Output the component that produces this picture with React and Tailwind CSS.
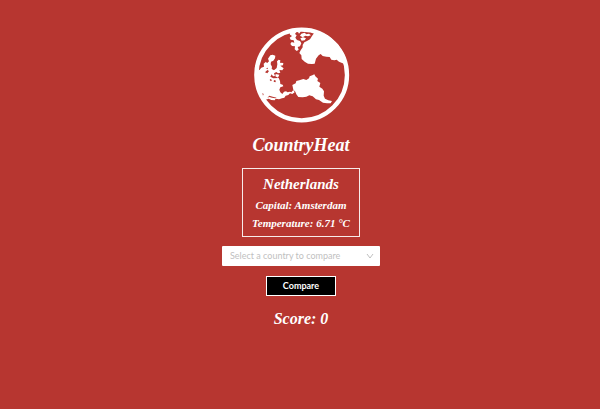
import React from "react";

function Globe() {
  return (
    <svg viewBox="0 0 306 306" className="size-[102px]" role="img" aria-label="Globe">
      <circle cx="155" cy="153" r="136" fill="none" stroke="#fff" strokeWidth="13" />
      <g fill="#fff">
        <path d="M187 20 L192 28 L186 36 L180 46 L171 51 L163 55 L158 63 L158 70 L152 79 L148 87 L154 94 L155 105 L164 113 L174 119 L186 120 L194 119 L198 104 L206 94 L212 90 L218 96 L229 98 L239 99 L244 107 L253 109 L260 107 L267 113 L278 118 L291 121 L283 92 L264 61 L235 35 L205 22 Z" />
        <path d="M119 24 L132 20 L139 24 L135 30 L140 34 L136 41 L141 48 L150 51 L154 58 L150 67 L143 69 L146 77 L140 81 L134 76 L135 67 L126 66 L121 60 L125 54 L133 56 L131 49 L122 47 L119 41 L126 36 L120 32 Z" />
        <path d="M142 20 L152 23 L147 29 Z M154 29 L164 26 L169 31 L177 29 L183 34 L174 37 L166 35 L158 40 L150 35 Z M151 43 L160 40 L168 43 L164 49 L155 50 Z" />
        <path d="M61 94 L68 92 L76 95 L75 103 L70 110 L63 113 L62 121 L66 128 L65 135 L72 139 L80 132 L82 121 L81 112 L86 107 L91 109 L90 116 L100 117 L99 124 L91 125 L101 133 L97 139 L88 138 L91 146 L84 148 L79 144 L72 148 L75 156 L69 157 L65 151 L61 158 L70 163 L86 162 L90 171 L91 180 L98 182 L100 187 L91 190 L88 197 L91 205 L97 210 L102 203 L108 202 L113 205 L120 203 L124 205 L130 198 L134 205 L127 210 L120 208 L115 213 L107 215 L103 221 L96 223 L87 226 L77 224 L74 229 L64 228 L56 224 L45 228 L35 216 L22 185 L18 150 L24 141 L29 137 L34 131 L42 128 L41 119 L48 113 L51 118 L57 112 L54 104 Z" />
        <path d="M77 150 L88 152 L84 161 L76 157 Z M86 131 L94 134 L90 139 L84 136 Z" />
        <path d="M127 183 L137 178 L139 171 L148 169 L160 165 L169 168 L177 163 L179 157 L187 154 L193 151 L196 157 L204 164 L202 171 L211 177 L208 188 L217 194 L222 202 L221 215 L225 224 L235 229 L246 231 L242 238 L231 238 L219 236 L207 228 L198 226 L188 217 L178 214 L169 218 L158 220 L145 219 L139 211 L136 203 L130 197 Z" />
      </g>
      <g fill="#b73630">
        <path d="M45 145 L52 138 L57 141 L52 148 Z M61 165 L66 168 L63 172 L59 168 Z M72 168 L78 170 L76 175 L71 173 Z M37 207 L41 210 L39 215 Z M48 133 L53 131 L54 136 Z" />
        <path d="M52 221 L58 215 L68 218 L80 221 L76 223 L66 221 L58 219 Z" />
      </g>
    </svg>
  );
}

export default function App() {
  return (
    <main className="flex min-h-screen flex-col items-center bg-[#b73630] pt-6 pl-0.5 font-['Liberation_Serif',serif] font-bold text-white">
      <Globe />
      <h1 className="mt-[7px] text-[18px] leading-6 italic">CountryHeat</h1>

      <section className="mt-[11px] flex flex-col items-center border border-white/90 px-[9px] pt-1 pb-1 italic">
        <h2 className="text-[15px] leading-[23px]">Netherlands</h2>
        <p className="text-[11px] leading-[18px]">Capital: Amsterdam</p>
        <p className="text-[11px] leading-[18px]">Temperature: 6.71 °C</p>
      </section>

      <form className="mt-[9px] flex flex-col items-center font-[Lato,sans-serif]" onSubmit={(e) => e.preventDefault()}>
        <div className="relative">
          <select
            aria-label="Select a country to compare"
            defaultValue=""
            className="block h-5 w-[158px] appearance-none rounded-[1px] bg-white pr-5 pl-2 text-[9px] font-normal text-[#bfbfbf]"
          >
            <option value="">Select a country to compare</option>
          </select>
          <svg viewBox="0 0 8 8" className="pointer-events-none absolute top-1.5 right-1.5 size-2" fill="none" stroke="#bfbfbf" aria-hidden="true">
            <path d="M1 2 L4 6 L7 2" />
          </svg>
        </div>
        <button type="submit" className="mt-2.5 h-5 w-[70px] border border-white bg-black text-[9px] font-bold">
          Compare
        </button>
      </form>

      <p className="mt-[11px] text-[16px] leading-6 italic">Score: 0</p>
    </main>
  );
}
